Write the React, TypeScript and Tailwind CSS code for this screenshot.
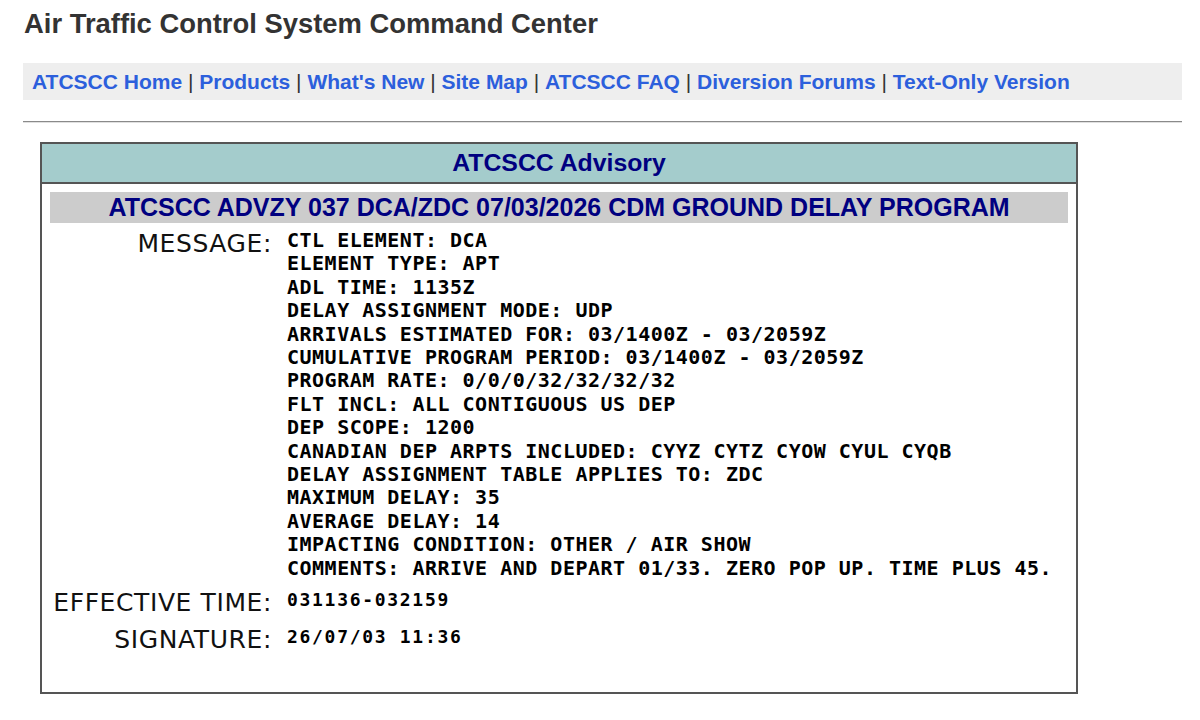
import React from 'react';

const links = ['ATCSCC Home', 'Products', "What's New", 'Site Map', 'ATCSCC FAQ', 'Diversion Forums', 'Text-Only Version'];

const messageLines = [
  'CTL ELEMENT: DCA',
  'ELEMENT TYPE: APT',
  'ADL TIME: 1135Z',
  'DELAY ASSIGNMENT MODE: UDP',
  'ARRIVALS ESTIMATED FOR: 03/1400Z - 03/2059Z',
  'CUMULATIVE PROGRAM PERIOD: 03/1400Z - 03/2059Z',
  'PROGRAM RATE: 0/0/0/32/32/32/32',
  'FLT INCL: ALL CONTIGUOUS US DEP',
  'DEP SCOPE: 1200',
  'CANADIAN DEP ARPTS INCLUDED: CYYZ CYTZ CYOW CYUL CYQB',
  'DELAY ASSIGNMENT TABLE APPLIES TO: ZDC',
  'MAXIMUM DELAY: 35',
  'AVERAGE DELAY: 14',
  'IMPACTING CONDITION: OTHER / AIR SHOW',
  'COMMENTS: ARRIVE AND DEPART 01/33. ZERO POP UP. TIME PLUS 45.',
];

// label column of the advisory table
function Label({ children }: { children: React.ReactNode }) {
  return (
    <div className="w-[230px] shrink-0 text-right font-['DejaVu_Sans',Verdana,sans-serif] text-[25px] tracking-[0.6px] leading-[29px] text-[#111]">
      {children}
    </div>
  );
}

export default function App() {
  return (
    <div className="min-h-[720px] bg-white pl-[23px] pr-[18px] font-['Liberation_Sans',Arial,sans-serif]">
      <h1 className="pt-[8px] pl-px text-[27.4px] leading-[31px] font-bold text-[#333]">
        Air Traffic Control System Command Center
      </h1>

      <div className="mt-[24px] h-[37px] bg-[#eeeeee] px-[9px] text-[21px] leading-[37px] font-bold whitespace-nowrap">
        {links.map((l, i) => (
          <span key={l}>
            {i > 0 && <span className="font-normal text-[#333]"> | </span>}
            <a className="text-[#2c5fdc]">{l}</a>
          </span>
        ))}
      </div>

      <div className="mt-[21px] border-t border-b border-t-[#8a8a8a] border-b-[#e0e0e0]" />

      <div className="ml-[17px] mt-[19px] w-[1038px] h-[552px] border-2 border-[#555]">
        <div className="h-[38px] bg-[#a4cccc] text-center text-[24.8px] leading-[38px] font-bold text-[#000080]">
          ATCSCC Advisory
        </div>
        <div className="h-[2px] bg-[#555]" />

        <div className="mx-[8px] mt-[8px] h-[31px] bg-[#cccccc] text-center text-[25px] leading-[31px] font-bold text-[#000080]">
          ATCSCC ADVZY 037 DCA/ZDC 07/03/2026 CDM GROUND DELAY PROGRAM
        </div>

        <div className="mt-[6px] flex items-start gap-[15px]">
          <Label>MESSAGE:</Label>
          <div className="font-['DejaVu_Sans_Mono',monospace] font-bold text-[20px] tracking-[0.5px] leading-[23.4px] text-black">
            {messageLines.map((line) => (
              <div key={line} className="whitespace-pre">{line}</div>
            ))}
          </div>
        </div>

        <div className="mt-[8px] flex items-start gap-[15px]">
          <Label>EFFECTIVE TIME:</Label>
          <div className="pt-px font-['DejaVu_Sans_Mono',monospace] font-bold text-[18px] tracking-[1.7px] leading-[21px] text-black">
            031136-032159
          </div>
        </div>

        <div className="mt-[8px] flex items-start gap-[15px]">
          <Label>SIGNATURE:</Label>
          <div className="pt-px font-['DejaVu_Sans_Mono',monospace] font-bold text-[18px] tracking-[1.7px] leading-[21px] text-black">
            26/07/03 11:36
          </div>
        </div>
      </div>
    </div>
  );
}
